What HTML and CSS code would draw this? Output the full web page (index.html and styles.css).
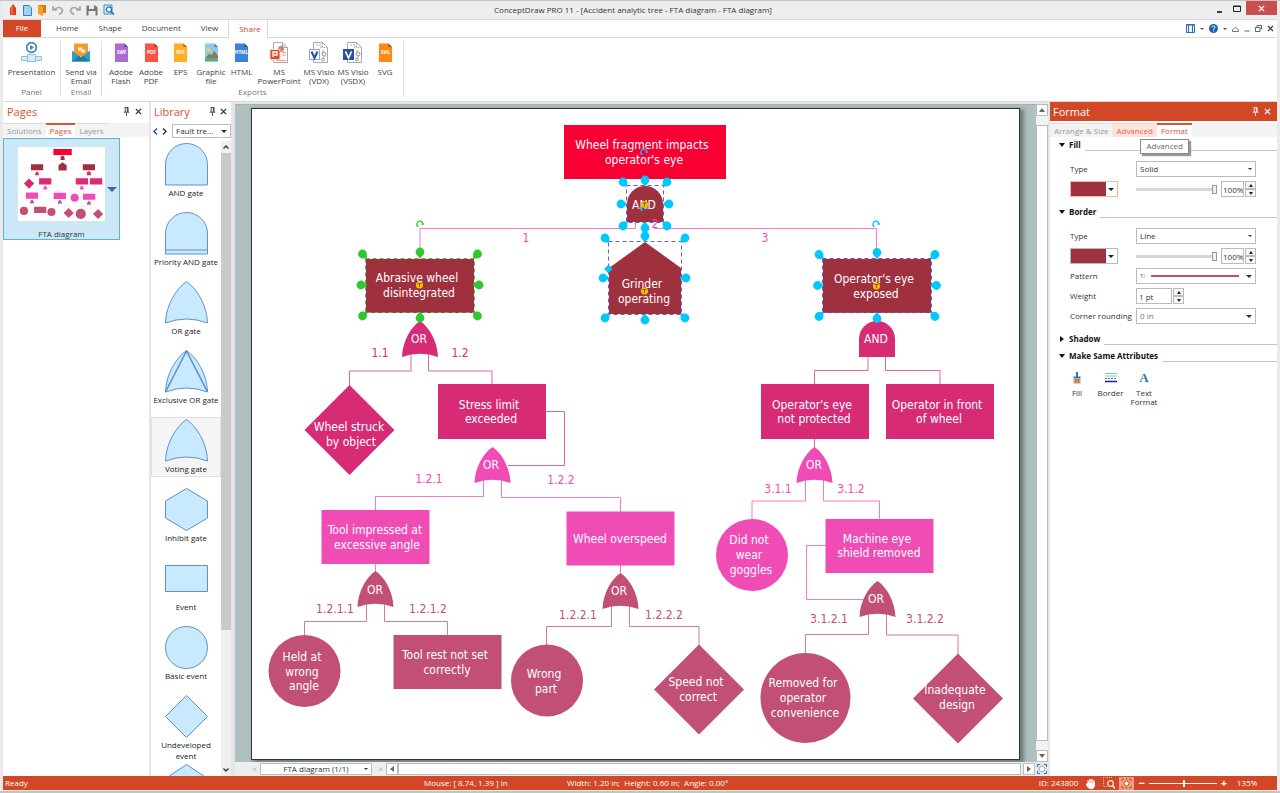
FILE: index.html
```html
<!DOCTYPE html>
<html lang="en">
<head>
<meta charset="utf-8">
<title>ConceptDraw PRO 11</title>
<link rel="stylesheet" href="styles.css">
</head>
<body>
<svg class="defs" aria-hidden="true">
  <defs>
    <symbol id="pin" viewBox="0 0 8 10"><path d="M2 .5h4M2.5.5v5M5 .5v5M5.8.5v5M.8 5.8h6.4M4 6v4" fill="none" stroke="currentColor"/></symbol>
    <symbol id="cross" viewBox="0 0 8 8"><path d="M1 1l6 6M7 1L1 7" fill="none" stroke="currentColor" stroke-width="1.5"/></symbol>
    <symbol id="file" viewBox="0 0 16 20"><path d="M1 0h10l4 4v16H1z" fill="currentColor"/><path d="M11 0l4 4h-4z" fill="#000" opacity=".35"/></symbol>
    <path id="handle" d="M0 0m4.4 0a4.4 4.4 0 1 1-4.4-4.4a4.4 4.4 0 0 1 4.4 4.4v4.4H0z"/>
    <path id="turn" d="M-1.500 2.800a3 3 0 1 1 4.300-2.300M1.500 .2h2.500" fill="none" stroke-width="1.200"/>
    <path id="or" d="M0 0C9 6 17.500 20 18 36Q0 29.500-18 36C-17.500 20-9 6 0 0z"/>
    <path id="and" d="M-18 36V18a18 18 0 0 1 36 0v18z"/>
    <g id="anchor"><circle r="3.600" fill="#f7bd00"/><path d="M-2-1.500h4M0-1.500v3.500" stroke="#8a6000" fill="none"/></g>
  </defs>
</svg>

<div class="window">
  <header class="titlebar">
    <div class="quick">
      <svg width="10" height="12" viewBox="0 0 10 12"><path d="M2 11V4l3-4 3 4v7z" fill="#dd3c1e"/><path d="M4 1.500v9" stroke="#f79a80"/></svg>
      <svg width="9" height="11" viewBox="0 0 9 11"><path d="M.5.500h5.500l2.500 2.500v7.500h-8z" fill="#9fd3ee" stroke="#3b83b5"/></svg>
      <svg width="10" height="12" viewBox="0 0 10 12"><path d="M1 1h8v8H6z" fill="#d67b13"/><path d="M1 1l5 2v9l-5-2z" fill="#f6a12b"/></svg>
      <svg width="12" height="11" viewBox="0 0 12 11"><path d="M1 1v4h4M1.500 5Q8 0 10.500 5Q10.500 8 7 9.500" fill="none" stroke="#a5a5a5" stroke-width="1.700"/></svg>
      <svg width="12" height="11" viewBox="0 0 12 11"><path d="M11 1v4H7M10.500 5Q4 0 1.500 5Q1.500 8 5 9.500" fill="none" stroke="#a5a5a5" stroke-width="1.700"/></svg>
      <svg width="12" height="11" viewBox="0 0 12 11"><path d="M.5.500h9l2 2v8H.500z" fill="#777"/><path d="M3 0h5v4H3zM2.500 6h7v5h-7z" fill="#eee"/></svg>
      <svg width="12" height="12" viewBox="0 0 12 12"><path d="M1 1h8v9H1z" fill="#d8ecf7" stroke="#3b8bc4"/><circle cx="6" cy="5.500" r="2.600" fill="#fff" stroke="#1f74b5" stroke-width="1.300"/><path d="M8 7.500l3 3" stroke="#1f74b5" stroke-width="1.600"/></svg>
    </div>
    <h1 class="caption">ConceptDraw PRO 11 - [Accident analytic tree - FTA diagram - FTA diagram]</h1>
    <div class="winbtns">
      <button aria-label="Minimize"><svg width="7" height="9" viewBox="0 0 7 9"><path d="M1 8h5" stroke="#111" stroke-width="1.600"/></svg></button>
      <button aria-label="Maximize"><svg width="8" height="7" viewBox="0 0 8 7"><path d="M.5 1h7v5.500h-7zM.5 1.500h7" fill="none" stroke="#222"/></svg></button>
      <button class="close" aria-label="Close"><svg width="7" height="7"><use href="#cross"/></svg></button>
    </div>
  </header>

  <nav class="tabs">
    <button class="tab file">File</button>
    <button class="tab">Home</button>
    <button class="tab">Shape</button>
    <button class="tab">Document</button>
    <button class="tab">View</button>
    <button class="tab on">Share</button>
    <div class="tools">
      <svg width="9" height="9" viewBox="0 0 9 9"><path d="M.5.500h8v8h-8z" fill="#eaf3fb" stroke="#2f6fb0"/><path d="M0 1h9M2.500 1v8M6.500 1v8" stroke="#2f6fb0"/></svg>
      <i class="caret"></i>
      <svg width="9" height="9" viewBox="0 0 9 9"><circle cx="4.500" cy="4.500" r="4.500" fill="#1b62b5"/><path d="M3 3.400Q3.200 2 4.600 2T6 3.400Q6 4.200 4.600 5v.7M4.600 6.500v1" stroke="#fff" fill="none"/></svg>
      <i class="caret"></i>
      <svg width="7" height="6" viewBox="0 0 7 6"><path d="M.5 5.500h6V4L3.500 1 .500 4z" fill="none" stroke="#777"/></svg>
      <svg width="6" height="7" viewBox="0 0 6 7"><path d="M.5 6h5" stroke="#666"/></svg>
      <svg width="7" height="7" viewBox="0 0 7 7"><path d="M2 2V.500h4.500V4H5M.5 2.500H5v4H.500z" fill="none" stroke="#666"/></svg>
      <svg width="7" height="7"><use href="#cross"/></svg>
    </div>
  </nav>

  <section class="ribbon" aria-label="Share">
    <div class="group panelgroup">
      <button class="cmd"><svg width="21" height="21" viewBox="0 0 21 21"><circle cx="10.500" cy="5.500" r="4.800" fill="#fff" stroke="#3f7fb5" stroke-width="1.700"/><path d="M9 3l4 2.500L9 8z" fill="#3f7fb5"/><path d="M.5 14.500h6v4h-6zM14.500 14.500h6v4h-6zM6.500 12.500h8v7h-8z" fill="#d3edfa" stroke="#8ebfd9"/></svg><span>Presentation</span></button>
      <h2>Panel</h2>
    </div>
    <div class="group mailgroup">
      <button class="cmd"><svg width="18" height="20" viewBox="0 0 18 20"><path d="M2 1h14v13H2z" fill="#f39a2c"/><path d="M6 5h4v3H6zM9 7h4v3H9z" fill="#fff2d8"/><path d="M0 8l9 7 9-7v11H0z" fill="#2d9fc9"/><path d="M0 19l7-6 2 2 2-2 7 6z" fill="#1d7fa6"/></svg><span>Send via Email</span></button>
      <h2>Email</h2>
    </div>
    <div class="group exportgroup">
      <div class="cmds">
        <button class="cmd"><svg class="swf" width="15" height="20" viewBox="0 0 16 20"><use href="#file"/><text x="8" y="12">SWF</text></svg><span>Adobe Flash</span></button>
        <button class="cmd"><svg class="pdf" width="15" height="20" viewBox="0 0 16 20"><use href="#file"/><text x="8" y="12">PDF</text></svg><span>Adobe PDF</span></button>
        <button class="cmd"><svg class="eps" width="15" height="20" viewBox="0 0 16 20"><use href="#file"/><text x="8" y="12">EPS</text></svg><span>EPS</span></button>
        <button class="cmd"><svg class="gfx" width="15" height="20" viewBox="0 0 16 20"><use href="#file"/><circle cx="5" cy="7" r="2" fill="#fbc55b"/><path d="M1 16l5-5 2 2 3-5 4 6v2z" fill="#8a7a62"/><path d="M1 16h14v3H1z" fill="#5fae6b"/></svg><span>Graphic file</span></button>
        <button class="cmd"><svg class="htm" width="15" height="20" viewBox="0 0 16 20"><use href="#file"/><text x="8" y="12">HTML</text></svg><span>HTML</span></button>
        <button class="cmd"><svg width="20" height="21" viewBox="0 0 20 21"><path d="M4.500.500h9l5 5v15h-14z" fill="#fff" stroke="#aaa"/><path d="M13.500.500v5h5" fill="#ddd" stroke="#aaa"/><circle cx="12" cy="7" r="3" fill="#d9826b"/><path d="M13 10.500h4M13 13h4M7 18.500h10" stroke="#e59a86"/><path d="M1 7.500h10v10H1z" fill="#e04b34" stroke="#f9d2ca"/><path d="M4 15v-5h4v3H5" fill="none" stroke="#fff" stroke-width="1.300"/></svg><span>MS<br>PowerPoint</span></button>
        <button class="cmd"><svg width="20" height="21" viewBox="0 0 20 21"><path d="M4.500.500h9l5 5v15h-14z" fill="#fff" stroke="#aaa"/><path d="M13.500.500v5h5M7 3h5v3M14 8v4M13 17l3-3" fill="none" stroke="#aaa" stroke-dasharray="2 1"/><circle cx="15" cy="12" r="2" fill="none" stroke="#999"/><circle cx="14" cy="17.500" r="1.500" fill="none" stroke="#999"/><path d="M.5 7.500h10v10h-10z" fill="#fff" stroke="#8ea5d8"/><path d="M2.500 9.500L5.500 16l3-6.500" fill="none" stroke="#2a4fa8" stroke-width="2"/></svg><span>MS Visio (VDX)</span></button>
        <button class="cmd"><svg width="20" height="21" viewBox="0 0 20 21"><path d="M4.500.500h9l5 5v15h-14z" fill="#fff" stroke="#aaa"/><path d="M13.500.500v5h5M7 3h5v3M14 8v4M13 17l3-3" fill="none" stroke="#aaa" stroke-dasharray="2 1"/><circle cx="15" cy="12" r="2" fill="none" stroke="#999"/><circle cx="14" cy="17.500" r="1.500" fill="none" stroke="#999"/><path d="M0 7h11v11H0z" fill="#2a4fa8"/><path d="M2.500 9.500L5.500 16l3-6.500" fill="none" stroke="#fff" stroke-width="1.700"/></svg><span>MS Visio (VSDX)</span></button>
        <button class="cmd"><svg class="svgfile" width="15" height="20" viewBox="0 0 16 20"><use href="#file"/><text x="8" y="12">SVG</text></svg><span>SVG</span></button>
      </div>
      <h2>Exports</h2>
    </div>
  </section>

  <main class="work">
    <aside class="pages">
      <div class="panelhead"><h2>Pages</h2><svg width="7" height="9"><use href="#pin"/></svg><svg width="7" height="7"><use href="#cross"/></svg></div>
      <div class="subtabs"><button>Solutions</button><button class="on">Pages</button><button>Layers</button></div>
      <button class="pagecard">
        <svg class="thumb" width="87" height="74" viewBox="252 109 767 650"><use href="#tree"/></svg>
        <i class="more"></i>
        <span>FTA diagram</span>
      </button>
    </aside>

    <aside class="library">
      <div class="panelhead"><h2>Library</h2><svg width="7" height="9"><use href="#pin"/></svg><svg width="7" height="7"><use href="#cross"/></svg></div>
      <div class="libpick">
        <svg width="14" height="7" viewBox="0 0 14 7"><path d="M4 .500L1 3.500l3 3" fill="none" stroke="#1d4fa3" stroke-width="1.400"/><path d="M10 .500l3 3-3 3" fill="none" stroke="#333" stroke-width="1.400"/></svg>
        <span class="pick"><select aria-label="Library"><option>Fault tre...</option></select></span>
      </div>
      <div class="libbody">
        <ul class="shapes">
          <li><svg viewBox="0 0 43 43"><path d="M.5 42V21.500a21 21 0 0 1 42 0V42z"/></svg><span>AND gate</span></li>
          <li><svg viewBox="0 0 43 43"><path d="M.5 42V21.500a21 21 0 0 1 42 0V42zM.5 38h42"/></svg><span>Priority AND gate</span></li>
          <li><svg viewBox="0 0 43 43"><path d="M21.500.500C32 8 42 24 42.500 42Q21.500 34 .500 42C1 24 11 8 21.500.500z"/></svg><span>OR gate</span></li>
          <li><svg viewBox="0 0 43 43"><path d="M21.500.500C32 8 42 24 42.500 42Q21.500 34 .500 42C1 24 11 8 21.500.500z"/><path d="M.5 42l21-41 21 41" fill="none" stroke-width="1.500"/></svg><span>Exclusive OR gate</span></li>
          <li class="hover"><svg viewBox="0 0 43 43"><path d="M21.500.500C32 8 42 24 42.500 42Q21.500 34 .500 42C1 24 11 8 21.500.500z"/></svg><span>Voting gate</span></li>
          <li><svg viewBox="0 0 43 43"><path d="M21.500.500l21 12.500v17l-21 12.500L.500 30V13z"/></svg><span>Inhibit gate</span></li>
          <li><svg viewBox="0 0 43 43"><path d="M.5 8.500h42v26H.500z"/></svg><span>Event</span></li>
          <li><svg viewBox="0 0 43 43"><circle cx="21.500" cy="21.500" r="21"/></svg><span>Basic event</span></li>
          <li><svg viewBox="0 0 43 43"><path d="M21.500.500l21 21-21 21-21-21z"/></svg><span>Undeveloped event</span></li>
          <li><svg viewBox="0 0 43 43"><path d="M21.500.500l21 14v28H.500v-28z"/></svg></li>
        </ul>
        <div class="libscroll"><svg width="6" height="4" viewBox="0 0 6 4"><path d="M.5 3.500L3 1l2.500 2.500" fill="none" stroke="#333" stroke-width="1.300"/></svg><i></i><svg class="last" width="6" height="4" viewBox="0 0 6 4"><path d="M.5.500L3 3 5.500.500" fill="none" stroke="#333" stroke-width="1.300"/></svg></div>
      </div>
    </aside>

    <section class="document">
      <div class="canvas">
        <svg class="sheet" viewBox="252 109 767 650" role="img" aria-label="FTA diagram">
          <g id="tree">
            <g class="link pink"><path d="M635.500 222V228.500H420V259M654 228.500H876.500V259"/></g>
            <g class="link magenta"><path d="M411 353V371H349.500V386M428.500 353V371H492V385M546 411.500H564.500V465.500H508M868 357V370.500H814.500V385M885.500 357V370.500H940V385M814.500 438V448"/></g>
            <g class="link pink"><path d="M483.500 480V496.500H375.500V511M501.500 480V497.500H620.500V512M375.500 564V573M620.500 565V574M805.500 479V501H752V519M823.500 479V501H879.500V519M826 545.500H806.500V599.500H864"/></g>
            <g class="link mauve"><path d="M366.500 604V621.500H304.500V636M384.500 604V621.500H447.500V636M611.500 605V626.500H546.500V645M629.500 605V626.500H699V645M868.500 614V634.500H805.500V653M886.500 614V635H958V654"/></g>
            <path class="red" d="M564 125h162v54H564z"/>
            <g class="dark">
              <use href="#and" x="645" y="186"/>
              <path d="M366 259h108v54H366zM823 259h108v54H823zM645 242l36 26v46h-72v-46z"/>
            </g>
            <g class="magenta">
              <use href="#or" x="420" y="321"/><use href="#and" x="877" y="321"/>
              <path d="M349.500 385l45 45-45 45-45-45zM438 384h108v55H438zM761 384h108v55H761zM886 384h108v55H886z"/>
            </g>
            <g class="pink">
              <use href="#or" x="492.500" y="447"/><use href="#or" x="814.500" y="447"/>
              <path d="M321.500 510h108v54h-108zM566.500 511.500h108v54h-108zM825.500 519h108v54h-108z"/><circle cx="752" cy="555" r="36"/>
            </g>
            <g class="mauve">
              <use href="#or" x="375.500" y="571"/><use href="#or" x="620.500" y="573"/><use href="#or" x="877.500" y="581"/>
              <circle cx="304.500" cy="671" r="36"/><circle cx="547" cy="680.500" r="36"/><circle cx="805.500" cy="698" r="45"/>
              <path d="M393.500 635h108v54h-108zM699 644.500l45 45-45 45-45-45zM958 653.500l45 45-45 45-45-45z"/>
            </g>
          </g>

          <g class="names">
            <text x="642" y="149">Wheel fragment impacts</text><text x="644" y="164">operator's eye</text>
            <text x="644" y="209">AND</text>
            <text x="417" y="282">Abrasive wheel</text><text x="419" y="297">disintegrated</text>
            <text x="642" y="288">Grinder</text><text x="644" y="303">operating</text>
            <text x="874" y="283">Operator's eye</text><text x="876" y="298">exposed</text>
            <text x="419" y="343">OR</text><text x="876" y="343">AND</text>
            <text x="349" y="431">Wheel struck</text><text x="351" y="446">by object</text>
            <text x="489" y="409">Stress limit</text><text x="491" y="423">exceeded</text>
            <text x="812" y="409">Operator's eye</text><text x="814" y="423">not protected</text>
            <text x="937" y="409">Operator in front</text><text x="939" y="423">of wheel</text>
            <text x="491" y="469">OR</text><text x="814" y="469">OR</text>
            <text x="375" y="534">Tool impressed at</text><text x="377" y="549">excessive angle</text>
            <text x="620" y="543">Wheel overspeed</text>
            <text x="749" y="544">Did not</text><text x="749" y="559">wear</text><text x="751" y="574">goggles</text>
            <text x="877" y="543">Machine eye</text><text x="879" y="557">shield removed</text>
            <text x="375" y="594">OR</text><text x="619" y="595">OR</text><text x="876" y="603">OR</text>
            <text x="302" y="661">Held at</text><text x="302" y="676">wrong</text><text x="304" y="690">angle</text>
            <text x="445" y="659">Tool rest not set</text><text x="447" y="674">correctly</text>
            <text x="544" y="678">Wrong</text><text x="546" y="693">part</text>
            <text x="696" y="686">Speed not</text><text x="698" y="701">correct</text>
            <text x="803" y="687">Removed for</text><text x="803" y="702">operator</text><text x="805" y="717">convenience</text>
            <text x="955" y="694">Inadequate</text><text x="957" y="709">design</text>
          </g>
          <g class="names ids">
            <g class="pink"><text x="526" y="242">1</text><text x="655" y="228">2</text><text x="765" y="242">3</text><text x="429" y="483">1.2.1</text><text x="561" y="484">1.2.2</text><text x="778" y="493">3.1.1</text><text x="851" y="493">3.1.2</text></g>
            <g class="magenta"><text x="380" y="357">1.1</text><text x="460" y="357">1.2</text></g>
            <g class="mauve"><text x="335" y="613">1.2.1.1</text><text x="428" y="613">1.2.1.2</text><text x="578" y="619">1.2.2.1</text><text x="664" y="619">1.2.2.2</text><text x="829" y="623">3.1.2.1</text><text x="925" y="623">3.1.2.2</text></g>
          </g>

          <g class="sel primary">
            <path class="frame" d="M365.500 258.500h109v54h-109z"/>
            <use href="#turn" transform="translate(420 224)"/>
            <use href="#handle" transform="translate(362.500 254)"/><use href="#handle" transform="translate(420 252) rotate(45)"/><use href="#handle" transform="translate(477.500 254) rotate(90)"/><use href="#handle" transform="translate(479 285) rotate(135)"/><use href="#handle" transform="translate(477.500 316) rotate(180)"/><use href="#handle" transform="translate(420 318) rotate(225)"/><use href="#handle" transform="translate(362.500 316) rotate(270)"/><use href="#handle" transform="translate(361 285) rotate(315)"/>
          </g>
          <g class="sel">
            <path class="frame" d="M626.500 185.500h37v37h-37zM608.500 241.500h73v73h-73zM822.500 258.500h109v54h-109z"/>
            <use href="#turn" transform="translate(644 152)"/><use href="#turn" transform="translate(644 208)"/><use href="#turn" transform="translate(876 224)"/>
            <use href="#handle" transform="translate(623 182)"/><use href="#handle" transform="translate(645 180) rotate(45)"/><use href="#handle" transform="translate(667 182) rotate(90)"/><use href="#handle" transform="translate(669 204) rotate(135)"/><use href="#handle" transform="translate(667 226) rotate(180)"/><use href="#handle" transform="translate(645 228) rotate(225)"/><use href="#handle" transform="translate(623 226) rotate(270)"/><use href="#handle" transform="translate(621 204) rotate(315)"/>
            <use href="#handle" transform="translate(605 238)"/><use href="#handle" transform="translate(645 236) rotate(45)"/><use href="#handle" transform="translate(685 238) rotate(90)"/><use href="#handle" transform="translate(686 278) rotate(135)"/><use href="#handle" transform="translate(685 318) rotate(180)"/><use href="#handle" transform="translate(645 320) rotate(225)"/><use href="#handle" transform="translate(605 318) rotate(270)"/><use href="#handle" transform="translate(603 278) rotate(315)"/>
            <use href="#handle" transform="translate(819 254.500)"/><use href="#handle" transform="translate(877 252.500) rotate(45)"/><use href="#handle" transform="translate(935 254.500) rotate(90)"/><use href="#handle" transform="translate(936.500 285.500) rotate(135)"/><use href="#handle" transform="translate(935 316.500) rotate(180)"/><use href="#handle" transform="translate(877 318.500) rotate(225)"/><use href="#handle" transform="translate(819 316.500) rotate(270)"/><use href="#handle" transform="translate(817.500 285.500) rotate(315)"/>
            <path d="M608.500 265l4 4-4 4-4-4z" stroke="#3b7f9c" stroke-width=".6"/>
          </g>
          <use href="#anchor" x="419.500" y="285"/><use href="#anchor" x="644.500" y="204.500"/><use href="#anchor" x="644.500" y="291"/><use href="#anchor" x="876.500" y="286"/>
        </svg>
      </div>
      <div class="vscroll"><i class="btn up"></i><i class="bar"></i><i class="btn down"></i></div>
      <div class="docbar">
        <span class="step">&lt;</span>
        <span class="pick small"><select aria-label="Page"><option>FTA diagram (1/1)</option></select></span>
        <span class="step">&gt;</span>
        <i class="btn left"></i><i class="bar"></i><i class="btn right"></i>
        <svg width="12" height="12" viewBox="0 0 12 12"><path d="M0 0h12v12H0z" fill="#dde6ea"/><circle cx="6" cy="6" r="2.800" fill="#fff" stroke="#a5b1be"/><path d="M1.500 4V1.500H4M8 1.500h2.500V4M10.500 8v2.500H8M4 10.500H1.500V8" fill="none" stroke="#3c6fb0"/></svg>
      </div>
    </section>

    <aside class="format">
      <div class="formathead"><h2>Format</h2><svg width="7" height="9"><use href="#pin"/></svg><svg width="7" height="7"><use href="#cross"/></svg></div>
      <div class="subtabs"><button>Arrange &amp; Size</button><button class="warm">Advanced<span class="tip" role="tooltip">Advanced</span></button><button class="on">Format</button></div>
      <h3 class="fold">Fill</h3>
      <div class="fields">
        <label for="ft">Type</label><span class="pick small"><select id="ft"><option>Solid</option></select></span>
        <button class="swatch hot" aria-label="Fill color"></button>
        <div class="opacity"><input type="range" aria-label="Fill opacity" value="100"><input class="num" aria-label="Fill opacity value" value="100%"><span class="spin"><button aria-label="More"></button><button aria-label="Less"></button></span></div>
      </div>
      <h3 class="fold">Border</h3>
      <div class="fields">
        <label for="bt">Type</label><span class="pick small"><select id="bt"><option>Line</option></select></span>
        <button class="swatch" aria-label="Border color"></button>
        <div class="opacity"><input type="range" aria-label="Border opacity" value="100"><input class="num" aria-label="Border opacity value" value="100%"><span class="spin"><button aria-label="More"></button><button aria-label="Less"></button></span></div>
        <label for="bp">Pattern</label><span class="pick pattern"><select id="bp"><option>1:</option></select></span>
        <label for="bw">Weight</label><div class="weight"><input class="num" id="bw" value="1 pt"><span class="spin"><button aria-label="More"></button><button aria-label="Less"></button></span></div>
        <label for="br">Corner rounding</label><span class="pick"><select id="br" class="dim"><option>0 in</option></select></span>
      </div>
      <h3 class="fold shut">Shadow</h3>
      <h3 class="fold second">Make Same Attributes</h3>
      <div class="same">
        <button><svg width="12" height="12" viewBox="0 0 12 12"><path d="M6 0v5M2.500 5.500h7" stroke="#1c7fae" stroke-width="2"/><path d="M2.500 7h7v4.500h-7z" fill="#d59b6c"/><path d="M5 7v4M7.500 7v4" stroke="#a96f42"/></svg>Fill</button>
        <button><svg width="12" height="12" viewBox="0 0 12 12"><path d="M0 1.500h12M0 4h12" stroke="#79c3ea"/><path d="M0 6.500h12" stroke="#777" stroke-dasharray="2 1"/><path d="M0 9.500h12" stroke="#1420b0" stroke-width="1.500"/></svg>Border</button>
        <button><b>A</b>Text<br>Format</button>
      </div>
    </aside>
  </main>

  <footer class="status">
    <span>Ready</span><span>Mouse: [ 8.74, 1.39 ] in</span><span>Width: 1.20 in;&nbsp; Height: 0.60 in;&nbsp; Angle: 0.00°</span>
    <div class="zoom">
      <span>ID: 243800</span>
      <svg class="hand" width="10" height="11" viewBox="0 0 10 11"><path d="M3 10L.500 6.500Q1 5.500 2.500 6.500L2 2.500M4 6V1M6 6V1M8 6.500V2.500" stroke="#fff" stroke-width="1.500" fill="none"/><path d="M2 5h7v3l-2 3H3.500z" fill="#fff"/></svg>
      <svg width="12" height="12" viewBox="0 0 12 12"><path d="M9 .500H.500v9h4" fill="none" stroke="#fbc9b8" stroke-dasharray="1 1"/><circle cx="7.500" cy="6.500" r="2.800" fill="none" stroke="#ffe6dc" stroke-width="1.200"/><path d="M9.500 8.500l2.500 3" stroke="#ffe6dc" stroke-width="1.500"/></svg>
      <svg width="15" height="13" viewBox="0 0 15 13"><path d="M0 0h15v13H0z" fill="#f0a07f"/><circle cx="7.500" cy="6.500" r="2.500" fill="#fff" stroke="#c9441f"/><path d="M3 4V2h2M10 2h2v2M12 9v2h-2M5 11H3V9M7.500 1v2M7.500 10v2" fill="none" stroke="#c9441f"/></svg>
      <b>−</b><input type="range" aria-label="Zoom" min="0" max="100" value="52"><b>+</b>
      <span class="pct">135%</span>
    </div>
  </footer>
</div>
</body>
</html>
```
FILE: styles.css
```css
* { box-sizing: border-box; }
html, body { height: 100%; }
body { margin: 0; background: #eaeaea; color: #333; font: 8px/10px "Open Sans", "Noto Sans", sans-serif; }
h1, h2, h3, ul { margin: 0; padding: 0; font: inherit; list-style: none; }
button, input, select { margin: 0; padding: 0; border: 0; border-radius: 0; background: none; color: inherit; font: inherit; }
svg { display: block; flex: none; }
.defs { position: absolute; width: 0; height: 0; }

.window { display: flex; flex-direction: column; height: 100vh; border: solid #c3c3c3; border-width: 1px 0 2px; padding: 0 3px 1px; }

/* Title bar */
.titlebar { display: grid; grid-template-columns: 122px 1fr 136px; align-items: center; flex: none; height: 18px; background: #eee; }
.quick { display: flex; align-items: center; gap: 5px; padding-left: 5px; }
.caption { text-align: center; font-size: 8px; }
.winbtns { display: flex; justify-content: flex-end; align-self: start; height: 14px; }
.winbtns button { display: grid; place-items: center; width: 18px; }
.winbtns .close { width: 31px; background: #c74f50; color: #fff; }

/* Ribbon */
.tabs { display: flex; flex: none; height: 19px; border-top: 1px solid #d9d9d9; border-bottom: 1px solid #dcdcdc; background: #fff; }
.tab { padding: 0 10px 1px; color: #444; }
.tab.file { width: 38px; margin-right: 5px; background: #d24726; color: #fff; }
.tab.on { width: 40px; height: 18px; border: solid #dcdcdc; border-width: 0 1px; background: #fff; color: #d24726; }
.tools { display: flex; align-items: center; gap: 5px; margin-left: auto; padding-right: 3px; color: #444; }
.caret { width: 4px; border: solid transparent; border-width: 2px 2px 0; border-top-color: #555; }

.ribbon { display: flex; flex: none; height: 64px; padding: 3px 0 4px; border-bottom: 1px solid #dcdcdc; background: #fff; }
.group { display: flex; flex-direction: column; justify-content: space-between; border-right: 1px solid #e0e0e0; text-align: center; }
.group h2 { color: #777; line-height: 10px; }
.panelgroup { width: 58px; }
.mailgroup { width: 41px; }
.exportgroup { width: 302px; }
.cmds { display: grid; grid-template-columns: 30px 30px 29px 32px 29px 46px 34px 34px 30px; padding-left: 4px; }
.cmd { display: flex; flex-direction: column; align-items: center; gap: 4px; padding-top: 1px; color: #444; line-height: 9px; }
.cmd svg { height: 21px; }
.cmd text { fill: #fff; font: bold 5px "Open Sans", sans-serif; text-anchor: middle; }
.swf { color: #ab6bd3; }
.pdf { color: #fb5444; }
.eps { color: #fdb022; }
.gfx { color: #8ecbe6; }
.htm { color: #3d82d8; }
.svgfile { color: #ff8a13; }

/* Work area */
.work { display: grid; grid-template-columns: 146px 82px 1fr 227px; flex: 1; min-height: 0; background: #e6e6e6; }
.pages, .library, .format { min-width: 0; min-height: 0; background: #fff; }
.library { display: flex; flex-direction: column; margin-left: 2px; }
.panelhead, .formathead { display: flex; align-items: center; gap: 5px; height: 19px; padding: 0 7px 0 4px; color: #333; }
.panelhead h2, .formathead h2 { flex: 1; color: #e04f30; font-size: 11px; line-height: 16px; }
.library .panelhead { gap: 4px; padding: 0 4px 0 3px; }
.formathead { background: #d24726; color: #fff; padding: 0 6px 0 3px; }
.formathead h2 { color: #fff; }

.subtabs { display: flex; height: 14px; margin: 2px 0 1px; background: #f3f3f3; color: #999; }
.subtabs button { padding: 0 4px; border-top: 1px solid #ddd; }
.subtabs .on { border-top: 2px solid #e04f30; background: #fff; color: #e04f30; }
.subtabs .warm { position: relative; background: #fde3d8; color: #e56a4b; }
.tip { position: absolute; left: 28px; top: 15px; z-index: 2; padding: 1px 5px 2px; border: 1px solid #888; background: #fff; color: #666; box-shadow: 2px 2px 1px #999; }

.pagecard { display: grid; grid-template-columns: 87px 1fr; row-gap: 8px; width: 117px; height: 102px; padding: 8px 0 0 14px; border: 1px solid #56b4dd; background: #cce8f6; color: #333; align-items: center; align-content: start; }
.thumb { background: #fff; }
.more { justify-self: center; margin-top: 10px; border: solid transparent; border-width: 5px 5px 0; border-top-color: #3a69a8; }

.libpick { display: flex; align-items: center; gap: 5px; height: 20px; padding-left: 2px; }
.libpick .pick { flex: 1; }
.libbody { display: flex; flex: 1; min-height: 0; }
.shapes { flex: 1; display: grid; grid-auto-rows: 69px; align-items: start; overflow: hidden; }
.shapes li { display: flex; flex-direction: column; align-items: center; gap: 1px; min-height: 60px; padding: 2px 0; color: #222; text-align: center; }
.shapes svg { width: 43px; height: 43px; fill: #c8e9fe; stroke: #5c91cc; }
.shapes span { line-height: 11px; }
.shapes .hover { background: #f5f5f5; outline: 1px solid #e0e0e0; outline-offset: -1px; }
.libscroll { display: flex; flex-direction: column; align-items: center; gap: 4px; width: 10px; padding: 4px 0; background: #efefef; }
.libscroll i { width: 10px; height: 76%; background: #cacaca; }
.libscroll .last { margin-top: auto; }

/* Form controls */
.pick { position: relative; display: block; height: 14px; }
.pick select { width: 100%; height: 100%; padding-left: 3px; border: 1px solid #bbb; background: #fff; appearance: none; color: #333; }
.pick::after { content: ""; position: absolute; right: 4px; top: 50%; margin-top: -1px; border: solid transparent; border-width: 3px 3px 0; border-top-color: #333; pointer-events: none; }
.pick.small::after { border-width: 2px 2px 0; }
.pick select.dim { color: #777; }

/* Document */
.document { display: grid; grid-template: minmax(0, 1fr) 14px / minmax(0, 1fr) 12px; margin: 2px 2px 0 4px; background: #eee; }
.canvas { padding: 3px 16px 2px; border-top: 1px solid #9fb3b0; background: #b0c0c0; overflow: hidden; }
.sheet { width: 100%; height: 100%; border: 1px solid #333; background: #fff; box-shadow: 3px 2px 4px 1px #6f7b7b; }
.vscroll { display: flex; flex-direction: column; background: #f2f2f2; }
.vscroll .bar { flex: 1; margin: 9px 0; border: 1px solid #bbb; background: #fff; }
.btn { display: grid; place-items: center; flex: none; width: 12px; height: 12px; border: 1px solid #bbb; background: #fff; }
.btn::after { content: ""; border: 3px solid transparent; }
.up::after { border-bottom: 4px solid #666; border-top-width: 0; }
.down::after { border-top: 4px solid #666; border-bottom-width: 0; }
.left::after { border-right: 4px solid #666; border-left-width: 0; }
.right::after { border-left: 4px solid #666; border-right-width: 0; }
.docbar { grid-column: 1 / -1; display: flex; align-items: center; padding-left: 14px; }
.docbar .step { width: 11px; text-align: center; color: #999; }
.docbar .pick { width: 112px; height: 12px; margin-right: 3px; }
.docbar select { padding: 0; text-align: center; text-align-last: center; line-height: 10px; }
.docbar .bar { flex: 1; height: 12px; margin-right: 2px; border: 1px solid #bbb; background: #fff; }
.docbar .right { margin-right: 1px; }

/* Diagram */
.red { fill: #f90035; }
.dark { fill: #9f313f; }
.magenta { fill: #d72b75; }
.pink { fill: #f04cb5; }
.mauve { fill: #c24f75; }
.link { fill: none; stroke-width: 1; }
.link.magenta { stroke: #e0669b; }
.link.pink { stroke: #f57bc8; }
.link.mauve { stroke: #d67b98; }
.names { fill: #fff; font: 12px "DejaVu Sans Condensed", "DejaVu Sans", sans-serif; text-anchor: middle; }
.sel { fill: #00c8ff; }
.sel.primary { fill: #30c832; }
.frame { fill: none; stroke: #6a5acd; stroke-dasharray: 4 3; }
.primary .frame { stroke: #58b858; }
.sel use[href="#turn"] { stroke: #00c8ff; }
.primary use[href="#turn"] { stroke: #30c832; }

/* Format panel */
.fold { display: flex; align-items: center; gap: 4px; height: 14px; padding-left: 9px; color: #111; font-weight: 700; }
.fold::before { content: ""; border: solid transparent; border-width: 4px 3px 0; border-top-color: #111; }
.fold::after { content: ""; flex: 1; height: 10px; border-bottom: 1px solid #c5c5c5; }
.subtabs + .fold { margin-top: 1px; }
.fold.shut::before { border-width: 3px 0 3px 4px; border-color: transparent; border-left-color: #111; margin: 0 1px; }
.fold.second { margin-top: 3px; }
.fields { display: grid; grid-template-columns: 66px 120px; grid-auto-rows: 16px; row-gap: 4px; align-items: center; padding: 9px 0 8px 20px; }
.fields .pick { height: 16px; }
.fields label { white-space: nowrap; }
.swatch { position: relative; width: 48px; height: 16px; border: 1px solid #bbb; background: linear-gradient(to right, #9f313f 35px, #fff 35px); }
.swatch.hot { border-color: #f6b9a0; }
.swatch::after { content: ""; position: absolute; right: 3px; top: 6px; border: solid transparent; border-width: 3px 3px 0; border-top-color: #222; }
.opacity, .weight { display: flex; align-items: center; }
.opacity input[type=range] { flex: 1; min-width: 0; height: 10px; margin-right: 4px; appearance: none; }
.opacity input::-webkit-slider-runnable-track { height: 3px; background: #d6d6d6; }
.opacity input::-webkit-slider-thumb { width: 5px; height: 9px; margin-top: -3px; border: 1px solid #999; background: #eee; appearance: none; }
.num { width: 23px; height: 16px; padding-left: 1px; border: 1px solid #bbb; }
.weight .num { width: 36px; padding-left: 2px; }
.spin { display: grid; grid-template-rows: 8px 8px; width: 11px; margin-left: 1px; }
.spin button { display: grid; place-items: center; border: 1px solid #bbb; background: #f6f6f6; }
.spin button::after { content: ""; border: solid transparent; border-width: 0 2px 3px; border-bottom-color: #222; }
.spin button:last-child::after { border-width: 3px 2px 0; border-top-color: #222; }
.pattern::before { content: ""; position: absolute; left: 15px; right: 17px; top: 7px; height: 2px; background: #b9566b; }
.pattern select { font-size: 6px; }
.same { display: grid; grid-template-columns: 34px 33px 34px; padding: 9px 0 0 10px; }
.same button { display: flex; flex-direction: column; align-items: center; justify-content: flex-start; line-height: 9px; }
.same svg, .same b { height: 12px; margin-bottom: 4px; }
.same b { color: #1c7fae; font: bold 13px/12px "Liberation Serif", serif; }

/* Status bar */
.status { display: grid; grid-template-columns: 419px 143px 1fr auto; align-items: center; flex: none; height: 14px; padding: 0 2px; background: #d24726; color: #fff; }
.zoom { display: flex; align-items: center; gap: 4px; }
.zoom .hand { margin: 0 3px 0 4px; }
.zoom b { font-size: 11px; }
.zoom input { width: 68px; height: 8px; margin: 0; appearance: none; }
.zoom input::-webkit-slider-runnable-track { height: 1px; background: #fff; }
.zoom input::-webkit-slider-thumb { width: 2px; height: 7px; margin-top: -3px; background: #fff; appearance: none; }
.zoom .pct { width: 44px; padding-left: 6px; }
```
